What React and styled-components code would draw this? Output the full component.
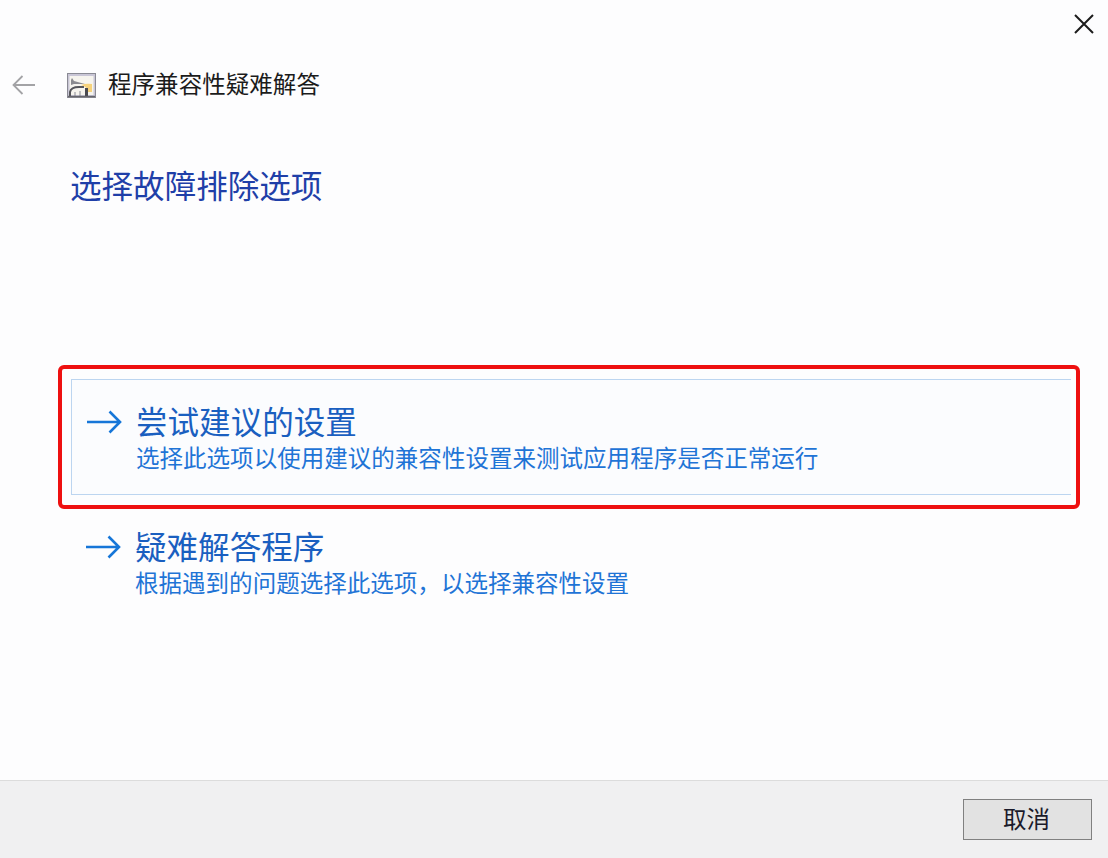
import React from "react";
import styled, { createGlobalStyle } from "styled-components";

const GlobalStyle = createGlobalStyle`
  html, body {
    margin: 0;
    padding: 0;
    background: #fdfdfe;
    font-family: "Noto Sans CJK SC", "Liberation Sans", sans-serif;
  }
`;

const Window = styled.div`
  width: 1108px;
  height: 858px;
  display: flex;
  flex-direction: column;
  overflow: hidden;
  background: #fdfdfe;
`;

const Main = styled.main`
  flex: 1;
  position: relative;
  display: flex;
  flex-direction: column;
`;

const CloseButton = styled.button`
  position: absolute;
  top: 13px;
  right: 13px;
  width: 22px;
  height: 22px;
  padding: 0;
  border: 0;
  background: none;
  display: block;
`;

const Header = styled.header`
  display: flex;
  align-items: center;
  height: 32px;
  margin-top: 69px;
  padding-left: 12px;
`;

const BackButton = styled.button`
  width: 24px;
  height: 22px;
  padding: 0;
  border: 0;
  background: none;
  margin-right: 31px;
  display: block;
`;

const AppTitle = styled.span`
  margin-left: 12px;
  margin-top: -4px;
  font-size: 23.55px;
  line-height: 32px;
  color: #1b1b1b;
`;

const Heading = styled.h1`
  margin: 62px 0 0 70px;
  font-size: 31.55px;
  line-height: 42px;
  font-weight: 400;
  color: #1f3fa8;
`;

const Options = styled.div`
  margin-top: 160px;
  margin-left: 58px;
  width: 1022px;
`;

const Highlight = styled.div`
  box-sizing: border-box;
  height: 144px;
  padding: 10px 5px 10px 9px;
  border: 4px solid #ee1010;
  border-radius: 6px;
`;

const Option = styled.div`
  box-sizing: border-box;
  display: flex;
  height: ${(p) => (p.$selected ? "116px" : "auto")};
  padding: ${(p) => (p.$selected ? "22px 0 0 14px" : "0 0 0 27px")};
  border: ${(p) => (p.$selected ? "1px solid #bcd5f0" : "0")};
  border-right: 0;
  background: ${(p) => (p.$selected ? "#fbfcfe" : "transparent")};
  margin-top: ${(p) => (p.$selected ? "0" : "18px")};
`;

const ArrowIcon = styled.svg`
  width: 36px;
  height: 24px;
  margin-top: 8px;
  margin-right: 14px;
  flex: none;
`;

const OptionText = styled.div`
  display: flex;
  flex-direction: column;
  margin-top: -3px;
`;

const OptionTitle = styled.span`
  font-size: 31.55px;
  line-height: 42px;
  color: #1a5fc0;
`;

const OptionDesc = styled.span`
  font-size: 23.54px;
  line-height: 30px;
  margin-top: 1px;
  color: #1f74d6;
`;

const Footer = styled.footer`
  box-sizing: border-box;
  height: 78px;
  padding: 18px 16px 0 0;
  display: flex;
  justify-content: flex-end;
  align-items: flex-start;
  background: #f0f0f1;
  border-top: 1px solid #dcdcdc;
`;

const CancelButton = styled.button`
  box-sizing: border-box;
  width: 129px;
  height: 41px;
  padding: 0 2px 4px 0;
  border: 1px solid #808080;
  background: #e2e2e2;
  font-family: inherit;
  font-size: 23.5px;
  color: #1a1a2a;
`;

function ProgramIcon() {
  return (
    <svg width="29" height="25" viewBox="0 0 29 25">
      <rect x="0.5" y="0.5" width="28" height="24" fill="#c9c6d6" stroke="#8a8a94" />
      <rect x="2.5" y="3" width="24" height="19" fill="#f6f4ee" />
      <path d="M4 7 L5 5 L7 8 L18 11 L7 11 L4 12 Z" fill="#8b8b90" />
      <path d="M3 23 V19 Q4 14 12 14 H17" fill="none" stroke="#55555a" strokeWidth="2" />
      <path d="M14 12 Q19 10 25 11 V19 H21 Q21 14 14 12 Z" fill="#f6d27c" />
      <rect x="18" y="15" width="3" height="8" fill="#4a4a50" />
      <path d="M8 23 V19 M13 23 V18" stroke="#8a8a94" strokeWidth="1" />
      <path d="M1 23.5 H28" stroke="#66666c" strokeWidth="1.4" />
    </svg>
  );
}

export default function App() {
  return (
    <Window>
      <GlobalStyle />
      <Main>
        <CloseButton aria-label="关闭">
          <svg width="22" height="22" viewBox="0 0 22 22">
            <path d="M2 2 L20 20 M20 2 L2 20" stroke="#1c1c1c" strokeWidth="2" fill="none" />
          </svg>
        </CloseButton>
        <Header>
          <BackButton aria-label="返回">
            <svg width="24" height="22" viewBox="0 0 24 22">
              <path d="M1 11 H23 M10.5 2 L1.5 11 L10.5 20" stroke="#a3a3a6" strokeWidth="1.8" fill="none" />
            </svg>
          </BackButton>
          <ProgramIcon />
          <AppTitle>程序兼容性疑难解答</AppTitle>
        </Header>
        <Heading>选择故障排除选项</Heading>
        <Options>
          <Highlight>
            <Option $selected>
              <ArrowIcon viewBox="0 0 36 24">
                <path d="M1 12 H34 M23.5 1.5 L34 12 L23.5 22.5" stroke="#1676d8" strokeWidth="2.6" fill="none" />
              </ArrowIcon>
              <OptionText>
                <OptionTitle>尝试建议的设置</OptionTitle>
                <OptionDesc>选择此选项以使用建议的兼容性设置来测试应用程序是否正常运行</OptionDesc>
              </OptionText>
            </Option>
          </Highlight>
          <Option>
            <ArrowIcon viewBox="0 0 36 24">
              <path d="M1 12 H34 M23.5 1.5 L34 12 L23.5 22.5" stroke="#1676d8" strokeWidth="2.6" fill="none" />
            </ArrowIcon>
            <OptionText>
              <OptionTitle>疑难解答程序</OptionTitle>
              <OptionDesc>根据遇到的问题选择此选项，以选择兼容性设置</OptionDesc>
            </OptionText>
          </Option>
        </Options>
      </Main>
      <Footer>
        <CancelButton>取消</CancelButton>
      </Footer>
    </Window>
  );
}
